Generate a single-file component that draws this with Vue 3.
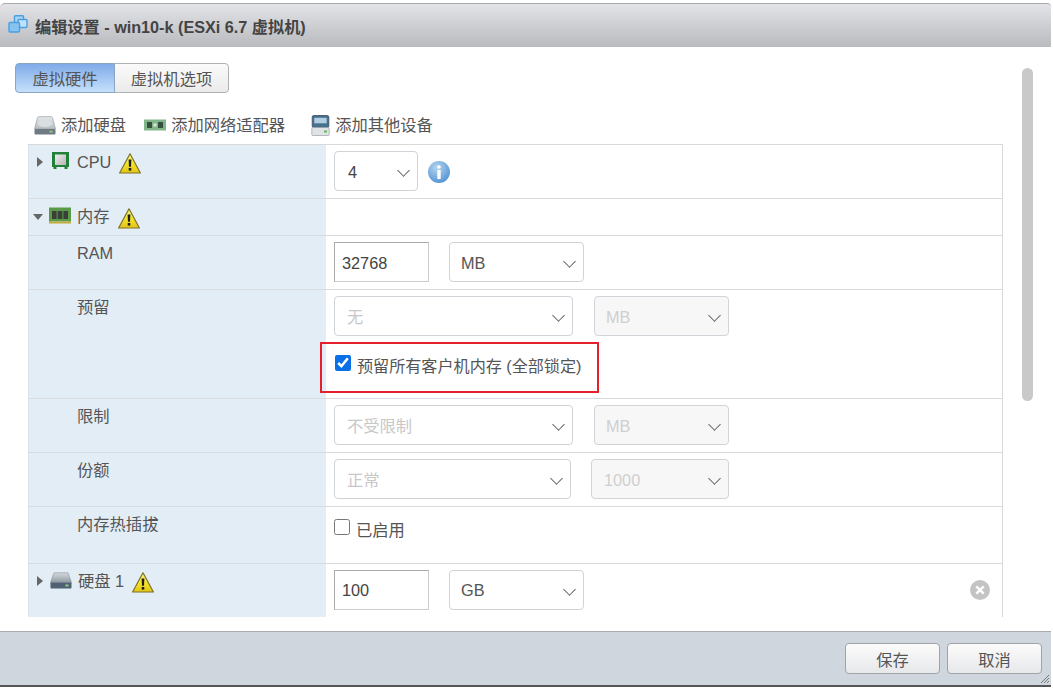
<script setup>
const toolbar = [
  { icon: 'i-disk', text: '添加硬盘', cls: 'tool-disk' },
  { icon: 'i-nic', text: '添加网络适配器', cls: 'tool-nic' },
  { icon: 'i-dev', text: '添加其他设备', cls: 'tool-dev' },
]
</script>

<template>
  <div class="page">
    <svg class="defs" aria-hidden="true">
      <defs>
        <linearGradient id="g-warn" x1="0" y1="0" x2="0" y2="1">
          <stop offset="0" stop-color="#f9f38c" />
          <stop offset=".5" stop-color="#f3e42e" />
          <stop offset="1" stop-color="#e4c414" />
        </linearGradient>
        <linearGradient id="g-disk" x1="0" y1="0" x2="0" y2="1">
          <stop offset="0" stop-color="#e6e9eb" />
          <stop offset="1" stop-color="#b6bcc1" />
        </linearGradient>
        <linearGradient id="g-disk2" x1="0" y1="0" x2="0" y2="1">
          <stop offset="0" stop-color="#d5dade" />
          <stop offset="1" stop-color="#8f99a2" />
        </linearGradient>
        <radialGradient id="g-info" cx="0.4" cy="0.3" r="0.8">
          <stop offset="0" stop-color="#b5d5f0" />
          <stop offset="1" stop-color="#4a8fd0" />
        </radialGradient>
        <linearGradient id="g-cpu" x1="0" y1="0" x2="1" y2="1">
          <stop offset="0" stop-color="#eeeeee" />
          <stop offset="1" stop-color="#b5b5b5" />
        </linearGradient>
        <symbol id="i-warn" viewBox="0 0 22 21">
          <path d="M11 .8 21.4 20H.6Z" fill="url(#g-warn)" stroke="#7d7228" stroke-width="1.2" stroke-linejoin="round" />
          <path d="M9.6 6.5h2.8l-.4 7.2h-2Z" fill="#1e1e1e" />
          <rect x="9.7" y="15" width="2.6" height="2.6" fill="#1e1e1e" />
        </symbol>
        <symbol id="i-disk" viewBox="0 0 22 19">
          <path d="M3.5 1.5Q3.8.7 5 .7h12q1.2 0 1.5.8L21.5 13h-21Z" fill="url(#g-disk)" stroke="#9aa1a7" stroke-width=".7" />
          <ellipse cx="11" cy="7.5" rx="7" ry="3.6" fill="#dadee1" />
          <rect x="0.5" y="13" width="21" height="5.5" rx="1" fill="#6f7a84" />
          <rect x="15.5" y="14.8" width="3" height="1.8" fill="#8fd07a" />
        </symbol>
        <symbol id="i-disk2" viewBox="0 0 22 17">
          <path d="M4 .8h14L21.5 10.5h-21Z" fill="url(#g-disk2)" stroke="#8a929a" stroke-width=".6" />
          <rect x="0.5" y="10.5" width="21" height="6" rx=".8" fill="#4f6172" />
          <rect x="15.5" y="12.5" width="3" height="2" fill="#8fd07a" />
        </symbol>
        <symbol id="i-nic" viewBox="0 0 22 12">
          <rect x="0" y="0.5" width="22" height="11" fill="#82b58a" />
          <rect x="3" y="3" width="5" height="6" fill="#35503f" />
          <rect x="14" y="3" width="5" height="6" fill="#35503f" />
          <rect x="9.5" y="4.5" width="3" height="3" fill="#d8e8d0" />
        </symbol>
        <symbol id="i-dev" viewBox="0 0 18 21">
          <rect x="0.7" y="0.5" width="16.6" height="12" rx="1.5" fill="#47708f" stroke="#3a4d5e" stroke-width=".8" />
          <rect x="2.8" y="2.8" width="12.4" height="5.5" fill="#b0cde2" />
          <rect x="0.3" y="12.5" width="17.4" height="8" rx="1" fill="#dfe3e6" stroke="#9aa1a7" stroke-width=".7" />
          <rect x="12.5" y="15.5" width="3" height="2" fill="#67b75a" />
        </symbol>
        <symbol id="i-cpu" viewBox="0 0 17 17">
          <rect x="0" y="0" width="17" height="15" fill="#23803a" />
          <rect x="3" y="2.5" width="11" height="10.5" fill="url(#g-cpu)" />
          <rect x="1.5" y="15" width="3" height="2" fill="#23803a" />
          <rect x="12.5" y="15" width="3" height="2" fill="#23803a" />
        </symbol>
        <symbol id="i-ram" viewBox="0 0 22 17">
          <rect x="0" y="0.5" width="22" height="14" fill="#5a9a48" />
          <rect x="3" y="4" width="4.6" height="8" fill="#3a3f3a" />
          <rect x="8.7" y="4" width="4.6" height="8" fill="#3a3f3a" />
          <rect x="14.4" y="4" width="4.6" height="8" fill="#3a3f3a" />
          <rect x="0" y="14.5" width="22" height="2" fill="#bfae3a" />
        </symbol>
      </defs>
    </svg>

    <div class="window">
      <header class="title">
        <svg class="title-icon" viewBox="0 0 20 18" width="20" height="18">
          <rect x="6.5" y="0.8" width="9" height="8" rx="1" fill="#a8d6f6" stroke="#4a9fe0" stroke-width="1.4" />
          <rect x="10" y="4.5" width="9" height="8" rx="1" fill="#bfe2f9" stroke="#4a9fe0" stroke-width="1.4" />
          <rect x="1" y="7.5" width="10.5" height="9.5" rx="1" fill="#86c4f0" stroke="#4a9fe0" stroke-width="1.4" />
        </svg>
        <span>编辑设置 - win10-k (ESXi 6.7 虚拟机)</span>
      </header>

      <main class="content">
        <div class="tabs">
          <button class="tab active">虚拟硬件</button>
          <button class="tab">虚拟机选项</button>
        </div>

        <div class="toolbar">
          <span v-for="t in toolbar" :key="t.text" class="tool">
            <svg :class="t.cls"><use :href="'#' + t.icon" /></svg>
            {{ t.text }}
          </span>
        </div>

        <div class="table">
          <div class="row r-cpu">
            <div class="label">
              <span class="arrow right"></span>
              <svg class="ico-cpu"><use href="#i-cpu" /></svg>
              <span class="head-text">CPU</span>
              <svg class="warn"><use href="#i-warn" /></svg>
            </div>
            <div class="value line">
              <div class="select s-cpu">4</div>
              <svg class="info" viewBox="0 0 22 22" width="22" height="22">
                <circle cx="11" cy="11" r="11" fill="url(#g-info)" />
                <circle cx="11" cy="6" r="1.8" fill="#fff" />
                <rect x="9.3" y="9" width="3.4" height="9" rx=".6" fill="#fff" />
              </svg>
            </div>
          </div>

          <div class="row r-mem">
            <div class="label mem">
              <span class="arrow down"></span>
              <svg class="ico-ram"><use href="#i-ram" /></svg>
              <span class="head-text">内存</span>
              <svg class="warn mem-warn"><use href="#i-warn" /></svg>
            </div>
            <div class="value"></div>
          </div>

          <div class="row r-std">
            <div class="label sub">RAM</div>
            <div class="value line">
              <div class="input">32768</div>
              <div class="select s-unit">MB</div>
            </div>
          </div>

          <div class="row r-res">
            <div class="label sub">预留</div>
            <div class="value col">
              <div class="line">
                <div class="select s-wide off">无</div>
                <div class="select s-unit off fill">MB</div>
              </div>
              <label class="check-box">
                <input type="checkbox" class="cb" checked />
                <span class="check-text">预留所有客户机内存 (全部锁定)</span>
              </label>
            </div>
          </div>

          <div class="row r-std">
            <div class="label sub">限制</div>
            <div class="value line">
              <div class="select s-wide off">不受限制</div>
              <div class="select s-unit off fill">MB</div>
            </div>
          </div>

          <div class="row r-std">
            <div class="label sub">份额</div>
            <div class="value line">
              <div class="select s-share off">正常</div>
              <div class="select s-num off fill">1000</div>
            </div>
          </div>

          <div class="row r-hot">
            <div class="label sub">内存热插拔</div>
            <div class="value">
              <label class="plain-check">
                <input type="checkbox" class="cb2" />
                <span class="plain-text">已启用</span>
              </label>
            </div>
          </div>

          <div class="row r-disk">
            <div class="label disk">
              <span class="arrow right"></span>
              <svg class="ico-disk"><use href="#i-disk2" /></svg>
              <span class="head-text">硬盘 1</span>
              <svg class="warn disk-warn"><use href="#i-warn" /></svg>
            </div>
            <div class="value line">
              <div class="input">100</div>
              <div class="select s-unit">GB</div>
              <svg class="del" viewBox="0 0 20 20" width="20" height="20">
                <circle cx="10" cy="10" r="10" fill="#c4c4c4" />
                <path d="M6.3 6.3 13.7 13.7M13.7 6.3 6.3 13.7" stroke="#fff" stroke-width="2.4" />
              </svg>
            </div>
          </div>
        </div>

        <div class="scrollbar"></div>
      </main>

      <footer class="footer">
        <button class="btn">保存</button>
        <button class="btn">取消</button>
        <svg class="grip" viewBox="0 0 10 10" width="10" height="10">
          <path d="M9 1 1 9M9 4 4 9M9 7 7 9" stroke="#777" stroke-width="1" />
        </svg>
      </footer>
    </div>
  </div>
</template>

<style>
html, body { margin: 0; background: #fff; }
</style>

<style scoped>
.page {
  width: 1053px;
  height: 691px;
  padding-top: 3px;
  box-sizing: border-box;
  overflow: hidden;
  background: #fff;
  font-family: "Liberation Sans", "Noto Sans CJK SC", sans-serif;
  font-size: 16.3px;
  color: #555;
}
.defs { position: absolute; width: 0; height: 0; }
.window {
  width: 1051px;
  height: 684px;
  display: flex;
  flex-direction: column;
}
.title {
  height: 44px;
  flex: none;
  box-sizing: border-box;
  border-top: 1px solid #a9a9a9;
  border-radius: 5px 4px 0 0;
  background: linear-gradient(#e3e4e8, #b9babd);
  display: flex;
  align-items: center;
  padding-left: 8px;
  gap: 7px;
  font-weight: 700;
  color: #444;
  font-size: 16.2px;
}
.title-icon { flex: none; margin-top: -3px; }
.content {
  position: relative;
  flex: 1;
  min-height: 0;
  overflow: hidden;
  padding: 16px 0 0 15px;
  box-sizing: border-box;
}
.tabs { display: flex; height: 30px; }
.tab {
  font: inherit;
  color: #555;
  padding: 0;
  border: 1px solid #aeb1b4;
  background: linear-gradient(#fafafa, #ebebeb);
  width: 115px;
  border-radius: 0 4px 4px 0;
  margin-left: -1px;
}
.tab.active {
  width: 100px;
  margin-left: 0;
  border-radius: 4px 0 0 4px;
  border-color: #8ba4c0;
  background: linear-gradient(#7fabe8, #c5e0fb);
  position: relative;
}
.toolbar {
  display: flex;
  height: 51px;
  padding-left: 19px;
  box-sizing: border-box;
  padding-top: 21px;
}
.tool {
  display: flex;
  align-items: center;
  gap: 5px;
  height: 22px;
  line-height: 22px;
  margin-right: 18px;
}
.tool:nth-child(2) { margin-right: 26px; }
.tool-disk { width: 22px; height: 19px; flex: none; }
.tool-nic { width: 22px; height: 12px; flex: none; }
.tool-dev { width: 19px; height: 21px; flex: none; }
.table {
  margin-left: 13px;
  width: 975px;
  border-top: 1px solid #d9d9d9;
  border-right: 1px solid #d9d9d9;
  box-sizing: border-box;
  height: 473px;
  overflow: hidden;
}
.row {
  display: flex;
  border-bottom: 1px solid #d9dcdf;
  box-sizing: border-box;
}
.r-cpu { height: 54px; }
.r-mem { height: 37px; }
.r-std { height: 54px; }
.r-res { height: 109px; }
.r-hot { height: 57px; }
.r-disk { height: 60px; border-bottom: 0; }
.label {
  width: 298px;
  flex: none;
  background: #e2edf5;
  box-sizing: border-box;
  border-left: 1px solid #dbe4ea;
  padding: 7px 0 0 8px;
  display: flex;
  align-items: flex-start;
  line-height: 20px;
}
.label.sub { padding-left: 48px; padding-top: 7px; }
.label.mem { padding-left: 4px; padding-top: 7px; }
.arrow { width: 0; height: 0; flex: none; margin-top: 5px; }
.arrow.right {
  border-left: 6px solid #666;
  border-top: 5px solid transparent;
  border-bottom: 5px solid transparent;
  margin-right: 9px;
}
.arrow.down {
  border-top: 6px solid #666;
  border-left: 5.5px solid transparent;
  border-right: 5.5px solid transparent;
  margin-top: 8px;
  margin-right: 6px;
}
.disk .arrow.right { margin-right: 7px; }
.ico-cpu { width: 17px; height: 17px; flex: none; margin-right: 8px; }
.ico-ram { width: 22px; height: 17px; flex: none; margin-top: 1px; margin-right: 6px; }
.ico-disk { width: 22px; height: 17px; flex: none; margin-top: 1px; margin-right: 6px; }
.head-text { line-height: 20px; }
.warn { width: 22px; height: 21px; flex: none; margin-left: 8px; margin-top: 1px; }
.mem-warn { margin-left: 8px; margin-top: 2px; }
.disk-warn { margin-left: 8px; }
.value {
  flex: 1;
  padding: 6px 0 0 8px;
  box-sizing: border-box;
  position: relative;
  min-width: 0;
}
.line { display: flex; align-items: flex-start; gap: 20px; }
.col { display: block; }
.select, .input {
  height: 40px;
  box-sizing: border-box;
  color: #444;
  line-height: 41px;
  flex: none;
}
.r-disk .select, .r-disk .input { line-height: 39px; }
.select {
  position: relative;
  background: #fff;
  border: 1px solid #d0d3d7;
  border-radius: 4px;
  padding-left: 11px;
}
.select::after {
  content: "";
  position: absolute;
  right: 9px;
  top: 14px;
  width: 8px;
  height: 8px;
  border-right: 1.4px solid #666;
  border-bottom: 1.4px solid #666;
  transform: rotate(45deg);
}
.input {
  width: 95px;
  border: 1px solid #aaa;
  border-bottom-color: #ccc;
  border-right-color: #ccc;
  padding-left: 7px;
}
.s-cpu { width: 84px; margin-right: -10px; padding-left: 13px; }
.s-unit { width: 135px; color: #555; }
.s-wide { width: 239px; padding-left: 12px; }
.s-share { width: 237px; padding-left: 12px; }
.s-num { width: 138px; padding-left: 12px; }
.off { color: #c8c8c8; }
.fill { background: #f7f7f7; color: #cfcfcf; }
.line > .s-wide + .s-unit { margin-left: 1px; }
.info { flex: none; margin-top: 10px; }
.check-box {
  display: flex;
  align-items: flex-start;
  width: 279px;
  height: 51px;
  margin: 6px 0 0 -14px;
  padding: 11px 0 0 13px;
  box-sizing: border-box;
  border: 2px solid #e3202c;
  line-height: 20px;
  color: #555;
}
.cb {
  width: 16px;
  height: 16px;
  margin: 0 6px 0 0;
  flex: none;
  accent-color: #0b6fe8;
}
.check-text { margin-top: 1px; font-size: 16.1px; }
.plain-check {
  display: flex;
  align-items: flex-start;
  height: 30px;
  color: #555;
}
.cb2 { width: 16px; height: 16px; margin: 6px 6px 0 0; flex: none; }
.plain-text { margin-top: 7px; line-height: 20px; }
.del { position: absolute; left: 644px; top: 16px; }
.scrollbar {
  position: absolute;
  top: 21px;
  left: 1022px;
  width: 11px;
  height: 333px;
  background: #c9c9c9;
  border-radius: 6px;
}
.footer {
  position: relative;
  height: 56px;
  flex: none;
  box-sizing: border-box;
  background: #d0d6de;
  border-top: 1px solid #a8abb0;
  border-bottom: 2px solid #555;
  display: flex;
  justify-content: flex-end;
  gap: 7px;
  padding: 11px 9px 0 0;
}
.btn {
  width: 95px;
  height: 31px;
  font: inherit;
  color: #555;
  border: 1px solid #a0a4a8;
  border-radius: 4px;
  background: linear-gradient(#fbfbfb, #e7e8ea);
  padding: 0;
}
.grip { position: absolute; right: 1px; bottom: 1px; }
</style>
